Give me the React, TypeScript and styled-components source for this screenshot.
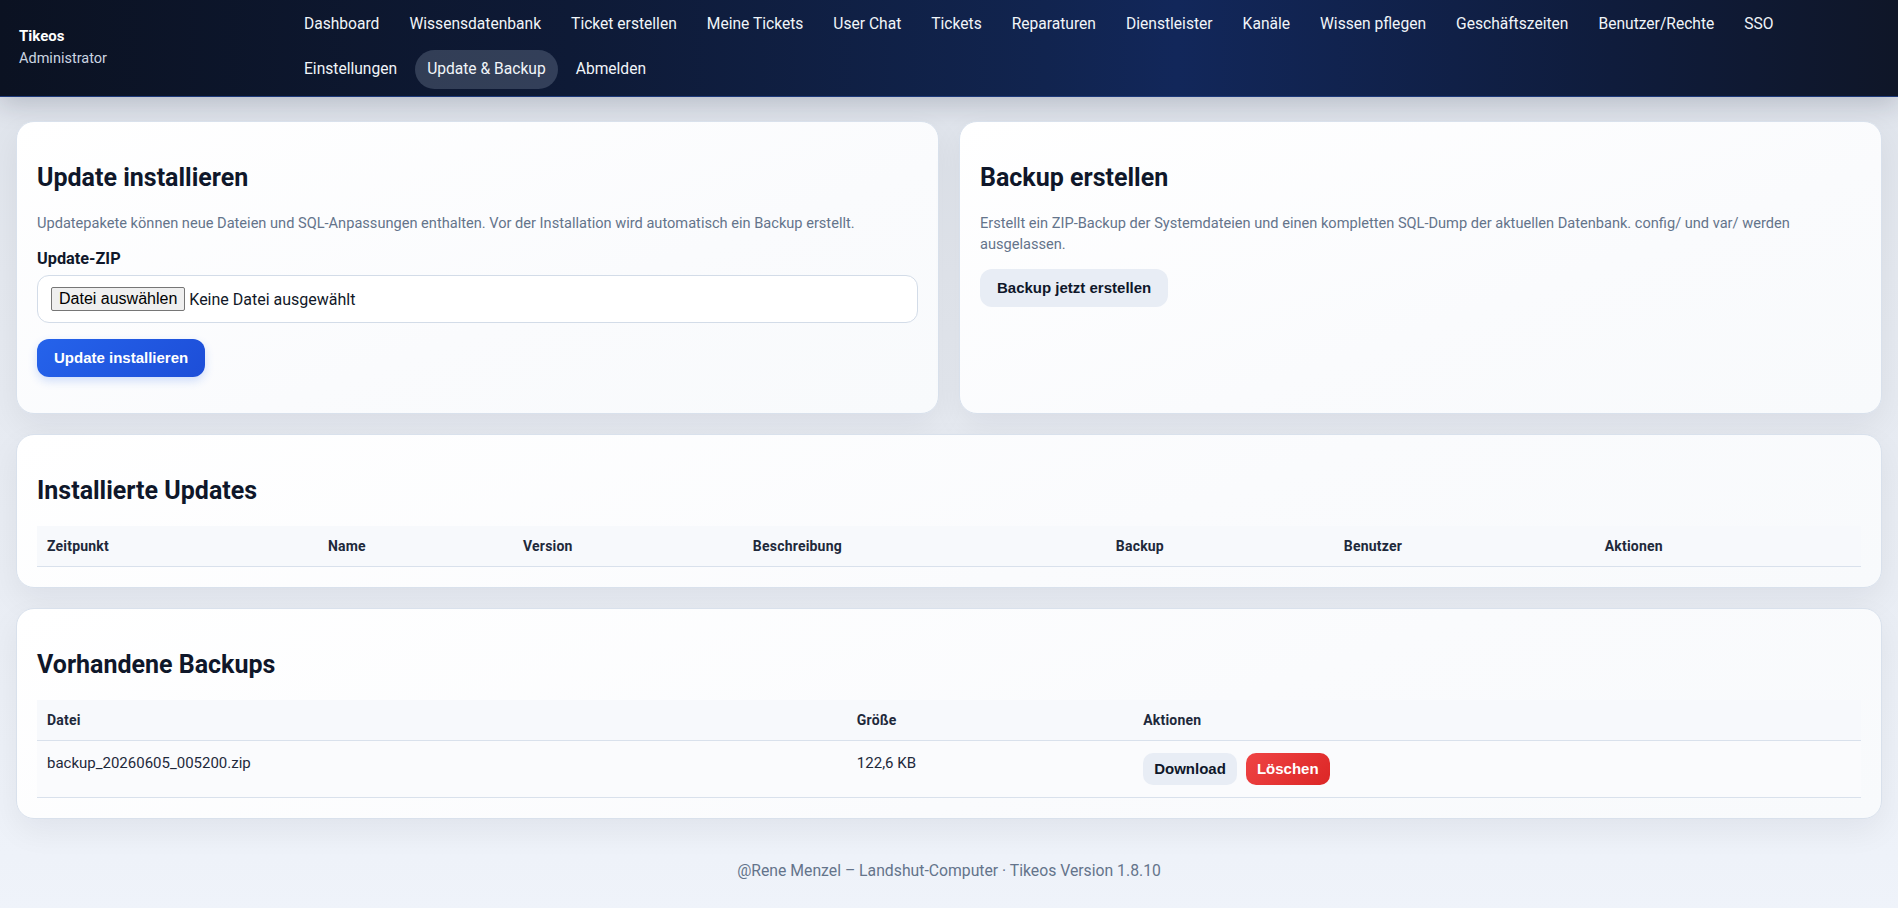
import React from "react";
import styled, { createGlobalStyle } from "styled-components";

const GlobalStyle = createGlobalStyle`
  * { box-sizing: border-box; }
  html, body { margin: 0; padding: 0; }
  body {
    font-family: "Segoe UI", Roboto, "Liberation Sans", sans-serif;
    color: #0f172a;
    background: linear-gradient(180deg, #dde2ea 0%, #e4e8ef 30%, #eaeef5 70%, #eff3fa 100%);
    min-height: 100vh;
  }
`;

const Header = styled.header`
  display: flex;
  align-items: center;
  padding: 5px 19px 7px;
  background: linear-gradient(90deg, #0b1222 0%, #0e1a36 30%, #11244f 55%, #12275a 62%, #0f1c3c 85%, #0f1628 100%);
  border-bottom: 1px solid #1e3a7a;
  box-shadow: 0 8px 24px rgba(15, 23, 42, 0.18);
`;

const Brand = styled.div`
  flex: 0 0 273px;
  display: flex;
  flex-direction: column;
  gap: 3px;
`;

const BrandName = styled.div`
  font-size: 15px;
  font-weight: 700;
  color: #ffffff;
  line-height: 19px;
`;

const BrandRole = styled.div`
  font-size: 14.5px;
  color: #cbd5e1;
  line-height: 19px;
`;

const Nav = styled.nav`
  flex: 1;
  display: flex;
  flex-wrap: wrap;
  gap: 6px 6px;
`;

const NavLink = styled.a<{ $active?: boolean }>`
  display: inline-block;
  padding: 8px 12px;
  line-height: 23px;
  font-size: 15.6px;
  color: #f1f5f9;
  text-decoration: none;
  border-radius: 999px;
  background: ${(p) => (p.$active ? "rgba(148, 163, 184, 0.28)" : "transparent")};
  cursor: pointer;
`;

const Main = styled.main`
  display: flex;
  flex-direction: column;
  gap: 20px;
  padding: 24px 16px 24px;
`;

const TwoCols = styled.div`
  display: grid;
  grid-template-columns: 1fr 1fr;
  gap: 20px;
`;

const Card = styled.section`
  background: linear-gradient(160deg, #ffffff 0%, #fafbfd 60%, #f8fafc 100%);
  border: 1px solid #d9e1ec;
  border-radius: 18px;
  padding: 20px;
  box-shadow: 0 12px 32px rgba(15, 23, 42, 0.06);
`;

const Title = styled.h2`
  margin: 21px 0 20px;
  font-size: 25px;
  line-height: 30px;
  font-weight: 700;
  color: #0f172a;
`;

const Hint = styled.p`
  margin: 0 0 14px;
  font-size: 14.6px;
  line-height: 21px;
  color: #64748b;
`;

const Form = styled.form`
  display: flex;
  flex-direction: column;
  align-items: flex-start;
  margin-bottom: 16px;
`;

const FieldLabel = styled.label`
  font-size: 16.3px;
  font-weight: 700;
  line-height: 22px;
  margin-bottom: 5px;
  color: #0f172a;
`;

const FileField = styled.div`
  align-self: stretch;
  display: flex;
  align-items: center;
  gap: 4px;
  height: 48px;
  padding: 0 13px;
  background: #ffffff;
  border: 1px solid #d3dce8;
  border-radius: 12px;
  margin-bottom: 16px;
`;

const FilePick = styled.button`
  font-family: "Liberation Sans", Arial, sans-serif;
  font-size: 16px;
  height: 24px;
  padding: 0 7px;
  color: #000000;
  background: #efefef;
  border: 1px solid #767676;
  border-radius: 2px;
`;

const FileName = styled.span`
  font-size: 16px;
  color: #111827;
`;

type Tone = "primary" | "soft" | "danger";

const Button = styled.button<{ $tone: Tone; $size?: "md" | "sm" }>`
  font-family: "Liberation Sans", Arial, sans-serif;
  font-size: 15px;
  font-weight: 700;
  line-height: 18px;
  border: none;
  cursor: pointer;
  padding: ${(p) => (p.$size === "sm" ? "7px 11px" : "10px 17px")};
  border-radius: ${(p) => (p.$size === "sm" ? "10px" : "12px")};
  color: ${(p) => (p.$tone === "soft" ? "#0f172a" : "#ffffff")};
  background: ${(p) =>
    p.$tone === "primary"
      ? "linear-gradient(135deg, #2563eb 0%, #1d4ed8 100%)"
      : p.$tone === "danger"
      ? "linear-gradient(135deg, #ef4444 0%, #dc2626 100%)"
      : "#e8edf5"};
  box-shadow: ${(p) =>
    p.$tone === "primary" ? "0 4px 10px rgba(37, 99, 235, 0.2)" : "none"};
`;

const Table = styled.table`
  width: 100%;
  border-collapse: collapse;
  table-layout: fixed;
`;

const Th = styled.th`
  text-align: left;
  font-size: 14px;
  letter-spacing: 0.2px;
  line-height: 16px;
  font-weight: 700;
  color: #1e293b;
  padding: 12px 10px;
  background: #f7f9fc;
  border-bottom: 1px solid #d9e1ec;
`;

const Td = styled.td`
  vertical-align: top;
  font-size: 15px;
  line-height: 21px;
  color: #1e293b;
  padding: 12px 10px;
  background: #fafbfd;
  border-bottom: 1px solid #d9e1ec;
`;

const Actions = styled.div`
  display: flex;
  gap: 9px;
`;

const Footer = styled.footer`
  text-align: center;
  font-size: 15.75px;
  line-height: 21px;
  color: #64748b;
  padding: 17px 16px 30px;
`;

const navItems = [
  "Dashboard",
  "Wissensdatenbank",
  "Ticket erstellen",
  "Meine Tickets",
  "User Chat",
  "Tickets",
  "Reparaturen",
  "Dienstleister",
  "Kanäle",
  "Wissen pflegen",
  "Geschäftszeiten",
  "Benutzer/Rechte",
  "SSO",
  "Einstellungen",
  "Update & Backup",
  "Abmelden",
];

const updateColumns: [string, string][] = [
  ["Zeitpunkt", "15.4%"],
  ["Name", "10.7%"],
  ["Version", "12.6%"],
  ["Beschreibung", "19.9%"],
  ["Backup", "12.5%"],
  ["Benutzer", "14.3%"],
  ["Aktionen", "14.6%"],
];

const backupColumns: [string, string][] = [
  ["Datei", "44.4%"],
  ["Größe", "15.7%"],
  ["Aktionen", "39.9%"],
];

const backups = [{ file: "backup_20260605_005200.zip", size: "122,6 KB" }];

export default function App() {
  return (
    <>
      <GlobalStyle />
      <Header>
        <Brand>
          <BrandName>Tikeos</BrandName>
          <BrandRole>Administrator</BrandRole>
        </Brand>
        <Nav>
          {navItems.map((item) => (
            <NavLink key={item} $active={item === "Update & Backup"}>
              {item}
            </NavLink>
          ))}
        </Nav>
      </Header>

      <Main>
        <TwoCols>
          <Card>
            <Title>Update installieren</Title>
            <Hint>
              Updatepakete können neue Dateien und SQL-Anpassungen enthalten. Vor der Installation wird
              automatisch ein Backup erstellt.
            </Hint>
            <Form onSubmit={(e) => e.preventDefault()}>
              <FieldLabel>Update-ZIP</FieldLabel>
              <FileField>
                <FilePick type="button">Datei auswählen</FilePick>
                <FileName>Keine Datei ausgewählt</FileName>
              </FileField>
              <Button $tone="primary" type="submit">
                Update installieren
              </Button>
            </Form>
          </Card>

          <Card>
            <Title>Backup erstellen</Title>
            <Hint>
              Erstellt ein ZIP-Backup der Systemdateien und einen kompletten SQL-Dump der aktuellen Datenbank.
              config/ und var/ werden ausgelassen.
            </Hint>
            <Button $tone="soft" type="button">
              Backup jetzt erstellen
            </Button>
          </Card>
        </TwoCols>

        <Card>
          <Title>Installierte Updates</Title>
          <Table>
            <colgroup>
              {updateColumns.map(([name, w]) => (
                <col key={name} style={{ width: w }} />
              ))}
            </colgroup>
            <thead>
              <tr>
                {updateColumns.map(([name]) => (
                  <Th key={name}>{name}</Th>
                ))}
              </tr>
            </thead>
            <tbody />
          </Table>
        </Card>

        <Card>
          <Title>Vorhandene Backups</Title>
          <Table>
            <colgroup>
              {backupColumns.map(([name, w]) => (
                <col key={name} style={{ width: w }} />
              ))}
            </colgroup>
            <thead>
              <tr>
                {backupColumns.map(([name]) => (
                  <Th key={name}>{name}</Th>
                ))}
              </tr>
            </thead>
            <tbody>
              {backups.map((b) => (
                <tr key={b.file}>
                  <Td>{b.file}</Td>
                  <Td>{b.size}</Td>
                  <Td>
                    <Actions>
                      <Button $tone="soft" $size="sm" type="button">
                        Download
                      </Button>
                      <Button $tone="danger" $size="sm" type="button">
                        Löschen
                      </Button>
                    </Actions>
                  </Td>
                </tr>
              ))}
            </tbody>
          </Table>
        </Card>
      </Main>

      <Footer>@Rene Menzel – Landshut-Computer · Tikeos Version 1.8.10</Footer>
    </>
  );
}
